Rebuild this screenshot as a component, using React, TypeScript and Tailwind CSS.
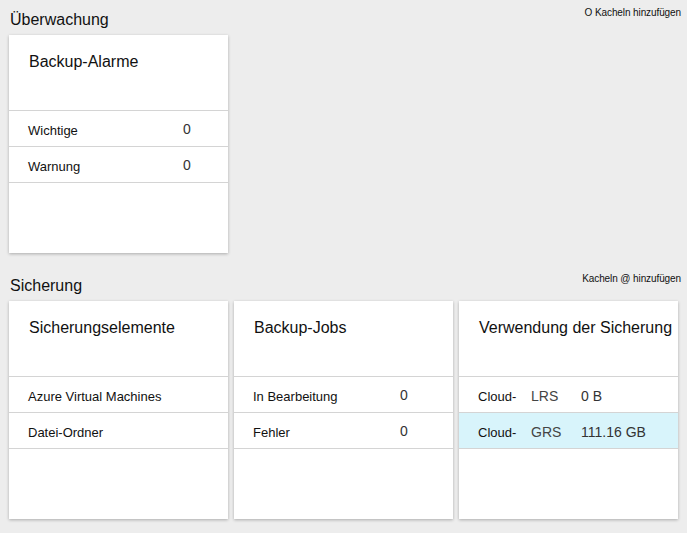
import React from "react";

type Row = { label: string; value?: string; mid?: string; active?: boolean };

function Tile({ title, rows, valueAt }: { title: string; rows: Row[]; valueAt?: string }) {
    return (
        <div className="w-[219px] h-[218px] bg-white shadow-[0_1px_3px_rgba(0,0,0,0.28)] shrink-0">
            <div className="h-[76px] pt-[17px] pl-[20px] text-[16px] leading-[20px] text-[#111] border-b border-[#d4d4d4] whitespace-nowrap">
                {title}
            </div>
            {rows.map((r) => (
                <div
                    key={r.label + (r.mid ?? "")}
                    className={`h-[36px] flex items-center pt-[4px] text-[13px] text-[#111] border-b border-[#d4d4d4] ${r.active ? "bg-[#d8f4fb]" : ""}`}
                >
                    {r.mid !== undefined ? (
                        <>
                            <span className="pl-[19px] w-[72px]">{r.label}</span>
                            <span className="w-[50px] text-[14px] text-[#444]">{r.mid}</span>
                            <span className="text-[14px] text-[#333]">{r.value}</span>
                        </>
                    ) : (
                        <>
                            <span className={`pl-[19px] ${valueAt}`}>{r.label}</span>
                            {r.value && <span className="text-[14px] text-[#333] -mt-[2px]">{r.value}</span>}
                        </>
                    )}
                </div>
            ))}
        </div>
    );
}

function SectionHeader({ title, action }: { title: string; action: string }) {
    return (
        <div className="relative flex justify-between pr-[6px]">
            <h2 className="ml-[1px] text-[16px] leading-[20px] text-[#111]">{title}</h2>
            <span className="text-[10px] leading-[12px] tracking-[-0.1px] text-[#111] -mt-[3px]">{action}</span>
        </div>
    );
}

export default function App() {
    return (
        <div className="w-[687px] h-[533px] bg-[#ededed] pl-[9px] overflow-hidden font-['Liberation_Sans',Arial,sans-serif]">
            <div className="h-[35px] pt-[10px]">
                <SectionHeader title="Überwachung" action="O Kacheln hinzufügen" />
            </div>
            <Tile
                title="Backup-Alarme"
                valueAt="w-[174px]"
                rows={[
                    { label: "Wichtige", value: "0" },
                    { label: "Warnung", value: "0" },
                ]}
            />

            <div className="h-[48px] pt-[23px]">
                <SectionHeader title="Sicherung" action="Kacheln @ hinzufügen" />
            </div>
            <div className="flex gap-[6px]">
                <Tile
                    title="Sicherungselemente"
                    rows={[{ label: "Azure Virtual Machines" }, { label: "Datei-Ordner" }]}
                />
                <Tile
                    title="Backup-Jobs"
                    valueAt="w-[166px]"
                    rows={[
                        { label: "In Bearbeitung", value: "0" },
                        { label: "Fehler", value: "0" },
                    ]}
                />
                <Tile
                    title="Verwendung der Sicherung"
                    rows={[
                        { label: "Cloud-", mid: "LRS", value: "0 B" },
                        { label: "Cloud-", mid: "GRS", value: "111.16 GB", active: true },
                    ]}
                />
            </div>
        </div>
    );
}
